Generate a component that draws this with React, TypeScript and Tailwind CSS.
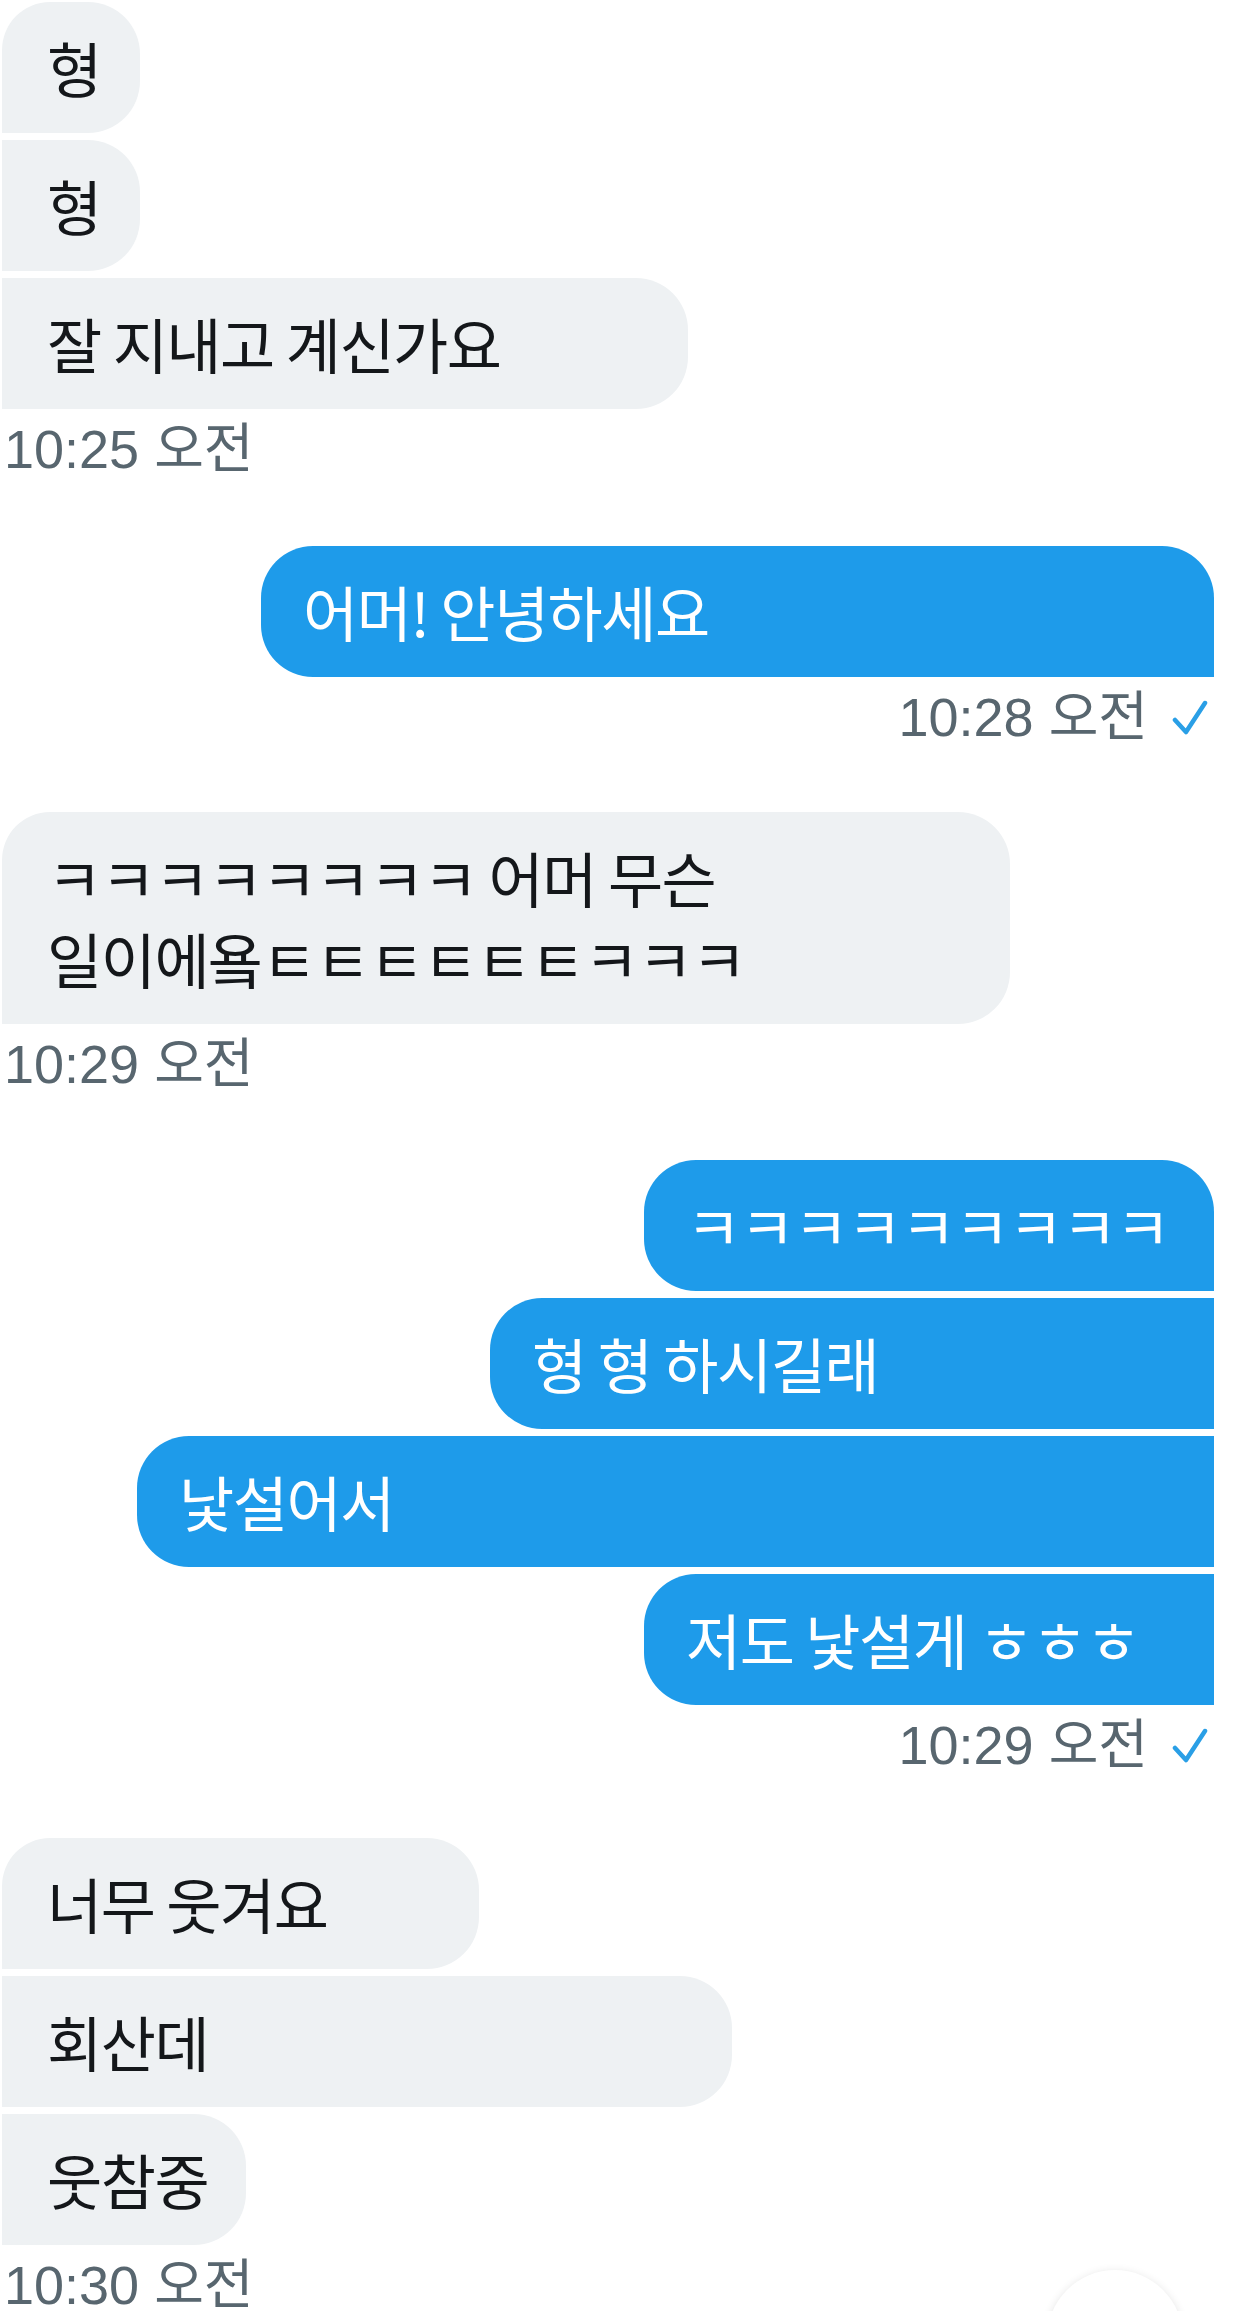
import React from 'react';

type Msg = { text: React.ReactNode; w: string; first?: boolean };

const Received = ({ items }: { items: Msg[] }) => (
    <div className="flex flex-col items-start gap-[7px]">
        {items.map((m, i) => (
            <div
                key={i}
                className={`${m.w} ${m.first ? 'rounded-tl-[48px]' : ''} rounded-r-[52px] bg-[#eef1f3] pl-[45px] pt-[24px] pb-[26px] text-[60px] leading-[81px] tracking-[-1.5px] text-[#14171a] whitespace-nowrap`}
            >
                {m.text}
            </div>
        ))}
    </div>
);

const Sent = ({ items }: { items: Msg[] }) => (
    <div className="flex flex-col items-end gap-[7px]">
        {items.map((m, i) => (
            <div
                key={i}
                className={`${m.w} ${m.first ? 'rounded-tr-[52px]' : ''} rounded-l-[52px] bg-[#1e9bea] pl-[42px] pt-[24px] pb-[26px] text-[60px] leading-[81px] tracking-[-1.5px] text-white whitespace-nowrap`}
            >
                {m.text}
            </div>
        ))}
    </div>
);

const Check = () => (
    <svg width="36" height="36" viewBox="0 0 36 36" fill="none" className="ml-[24px]">
        <path d="M3 21 L14 33 L33 4" stroke="#2a9fe6" strokeWidth="4.5" strokeLinecap="round" strokeLinejoin="round" />
    </svg>
);

const Stamp = ({ time, right }: { time: string; right?: boolean }) => (
    <div
        className={`mt-3 flex h-[56px] items-center font-['Liberation_Sans','Noto_Sans_CJK_KR',sans-serif] text-[54px] leading-[56px] text-[#58666f] ${right ? 'justify-end pr-[6px]' : 'pl-[2px]'}`}
    >
        <span>{time} 오전</span>
        {right && <Check />}
    </div>
);

export default function App() {
    return (
        <div className="relative h-[2311px] overflow-hidden bg-white pt-[2px] pl-[2px] pr-[41px] font-['Noto_Sans_CJK_KR',sans-serif]">
            <Received
                items={[
                    { text: '형', w: 'w-[138px]', first: true },
                    { text: '형', w: 'w-[138px]' },
                    { text: '잘 지내고 계신가요', w: 'w-[686px]' },
                ]}
            />
            <Stamp time="10:25" />

            <div className="mt-[69px]">
                <Sent items={[{ text: '어머! 안녕하세요', w: 'w-[953px]', first: true }]} />
            </div>
            <Stamp time="10:28" right />

            <div className="mt-[67px]">
                <Received
                    items={[
                        {
                            text: (
                                <>
                                    ㅋㅋㅋㅋㅋㅋㅋㅋ 어머 무슨
                                    <br />
                                    일이에욬ㅌㅌㅌㅌㅌㅌㅋㅋㅋ
                                </>
                            ),
                            w: 'w-[1008px]',
                            first: true,
                        },
                    ]}
                />
            </div>
            <Stamp time="10:29" />

            <div className="mt-[68px]">
                <Sent
                    items={[
                        { text: 'ㅋㅋㅋㅋㅋㅋㅋㅋㅋ', w: 'w-[570px]', first: true },
                        { text: '형 형 하시길래', w: 'w-[724px]' },
                        { text: '낯설어서', w: 'w-[1077px]' },
                        { text: '저도 낯설게 ㅎㅎㅎ', w: 'w-[570px]' },
                    ]}
                />
            </div>
            <Stamp time="10:29" right />

            <div className="mt-[65px]">
                <Received
                    items={[
                        { text: '너무 웃겨요', w: 'w-[477px]', first: true },
                        { text: '회산데', w: 'w-[730px]' },
                        { text: '웃참중', w: 'w-[244px]' },
                    ]}
                />
            </div>
            <Stamp time="10:30" />

            {/* 아래로 스크롤 버튼 */}
            <div className="absolute left-[1047px] top-[2270px] h-[136px] w-[136px] rounded-full bg-white shadow-[0_2px_10px_rgba(0,0,0,0.12)]" />
        </div>
    );
}
